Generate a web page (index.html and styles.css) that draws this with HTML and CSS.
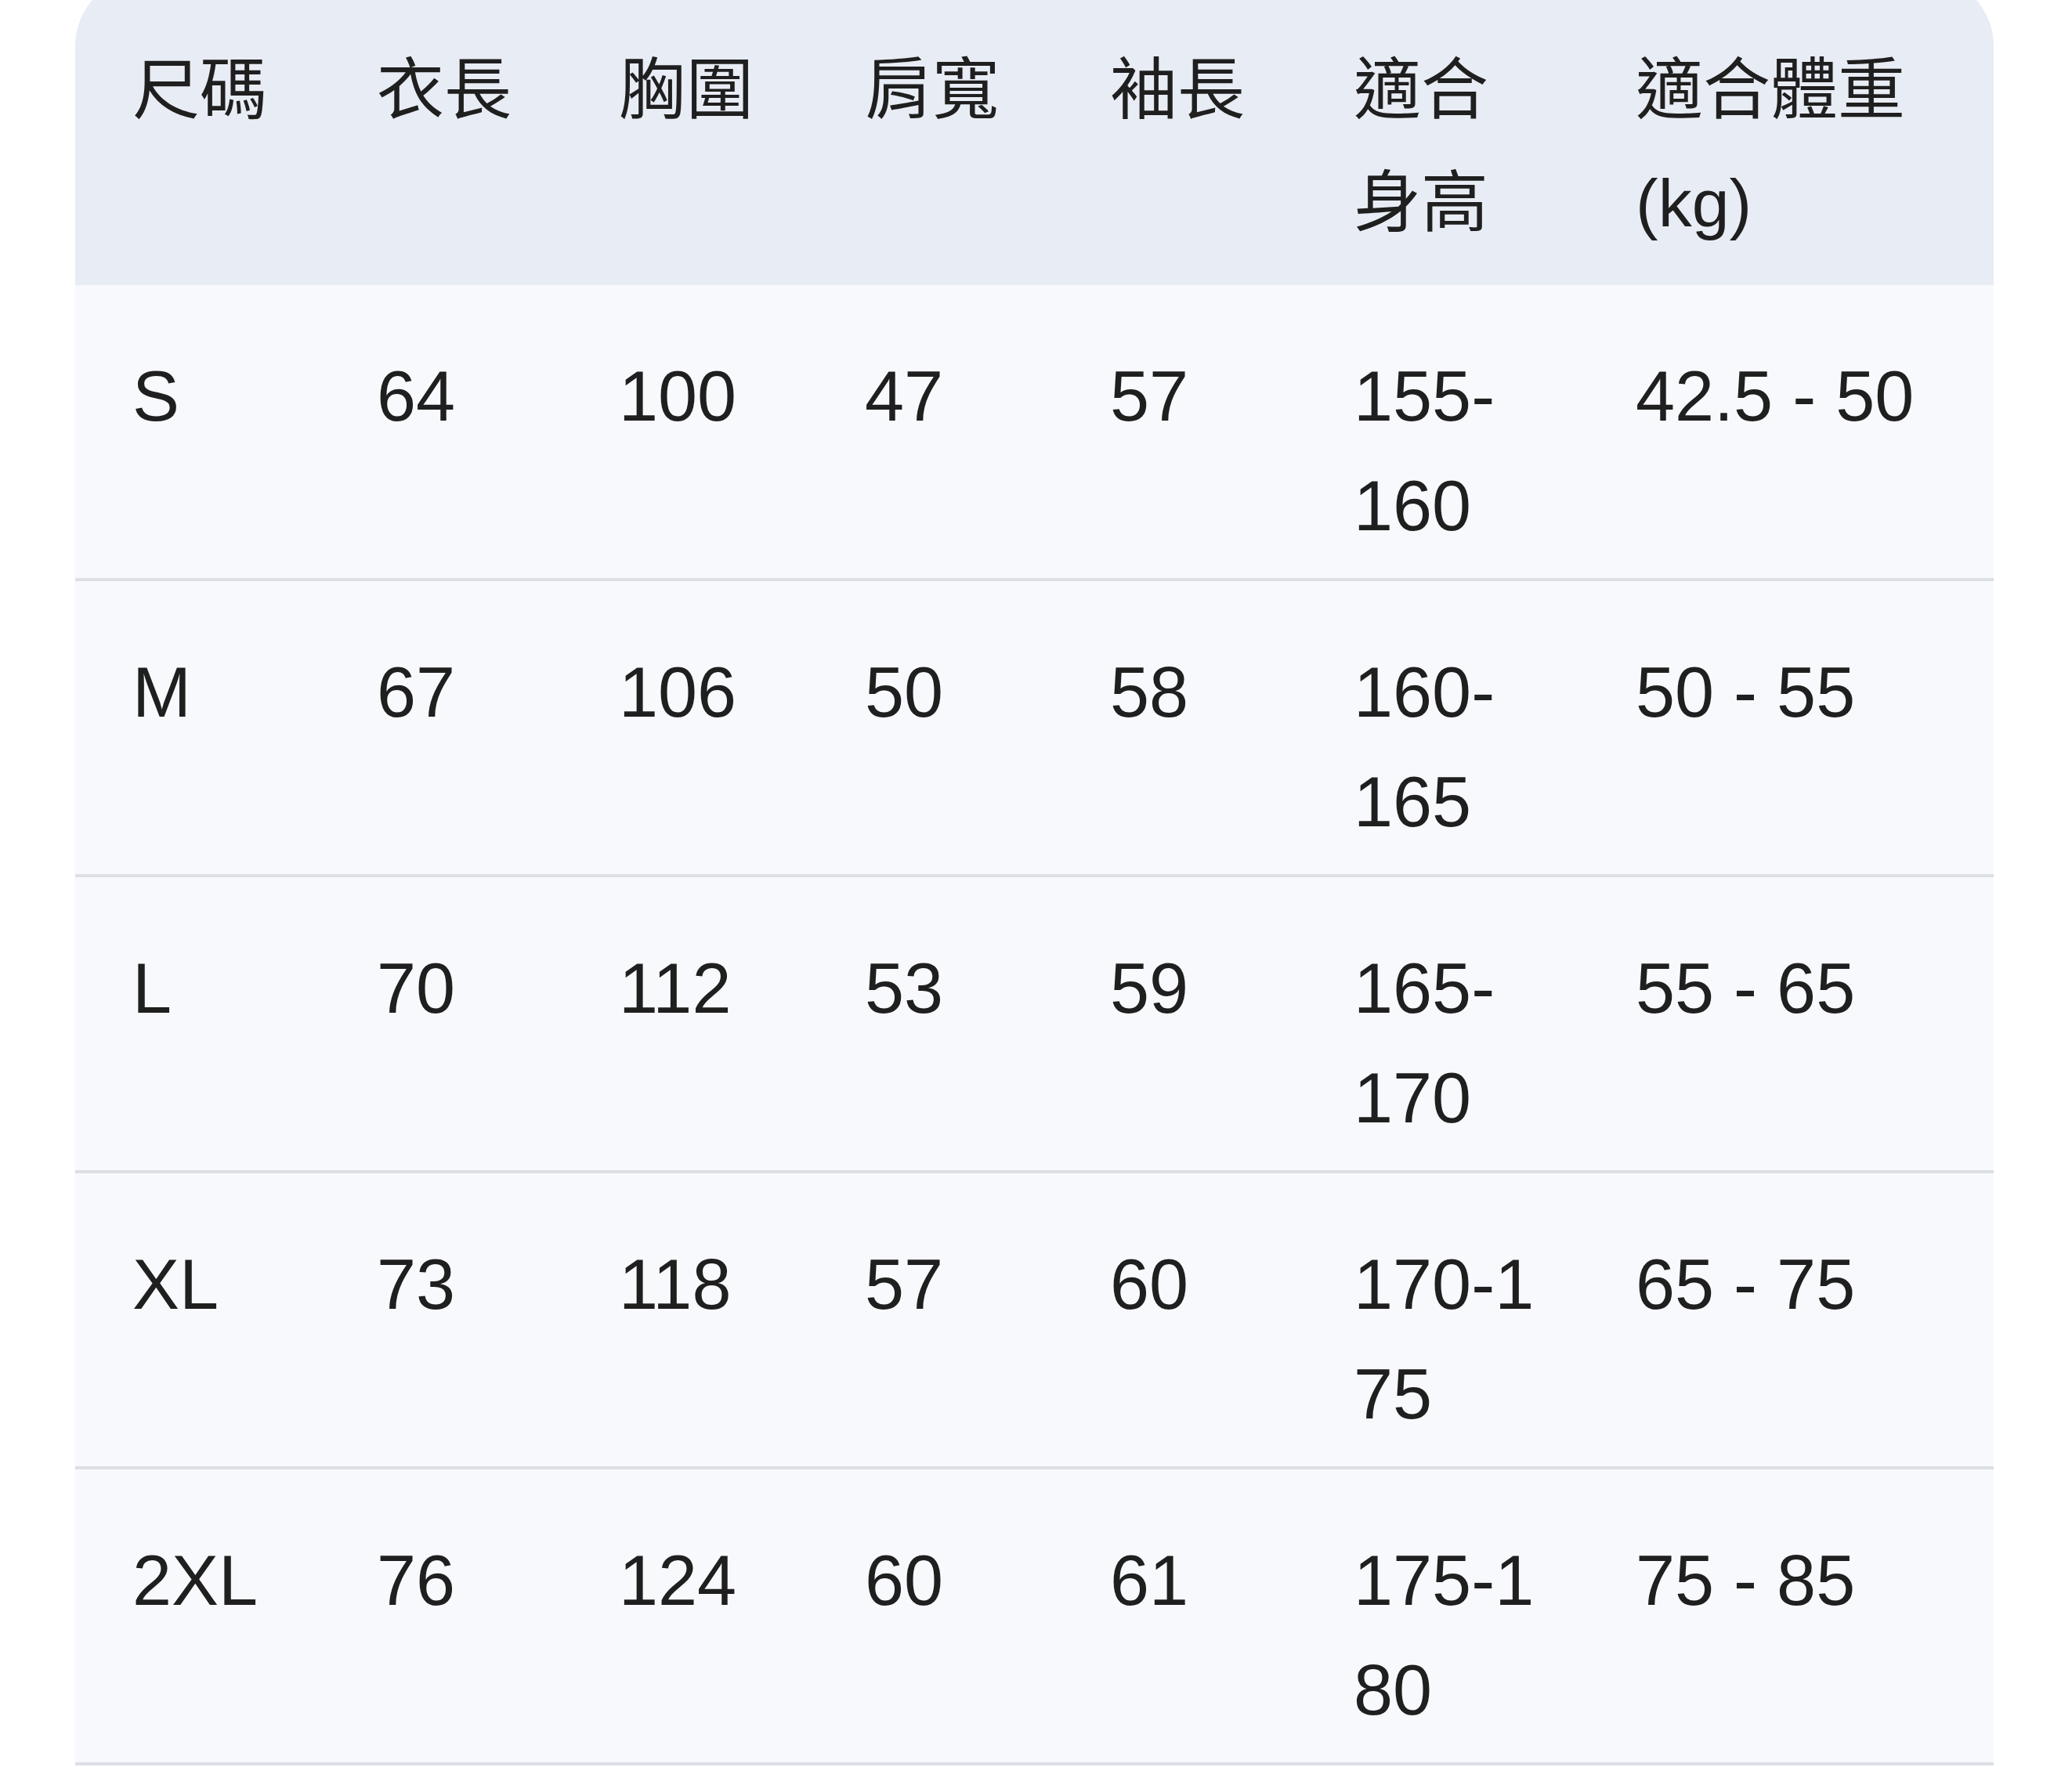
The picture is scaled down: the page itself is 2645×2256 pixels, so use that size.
FILE: index.html
```html
<!DOCTYPE html>
<html lang="zh-Hant">
<head>
<meta charset="utf-8">
<title>尺碼表</title>
<link rel="stylesheet" href="styles.css">
</head>
<body>
<div class="card">
  <table class="size-table">
    <colgroup>
      <col class="c1"><col class="c2"><col class="c3"><col class="c4"><col class="c5"><col class="c6"><col class="c7">
    </colgroup>
    <thead>
      <tr>
        <th>尺碼</th><th>衣長</th><th>胸圍</th><th>肩寬</th><th>袖長</th><th>適合身高</th><th>適合體重(kg)</th>
      </tr>
    </thead>
    <tbody>
      <tr><td>S</td><td>64</td><td>100</td><td>47</td><td>57</td><td>155-160</td><td>42.5 - 50</td></tr>
      <tr><td>M</td><td>67</td><td>106</td><td>50</td><td>58</td><td>160-165</td><td>50 - 55</td></tr>
      <tr><td>L</td><td>70</td><td>112</td><td>53</td><td>59</td><td>165-170</td><td>55 - 65</td></tr>
      <tr><td>XL</td><td>73</td><td>118</td><td>57</td><td>60</td><td>170-&#8288;175</td><td>65 - 75</td></tr>
      <tr><td>2XL</td><td>76</td><td>124</td><td>60</td><td>61</td><td>175-&#8288;180</td><td>75 - 85</td></tr>
    </tbody>
  </table>
</div>
</body>
</html>
```

FILE: styles.css
```css
html, body {
  margin: 0;
  padding: 0;
  background: #ffffff;
}

body {
  font-family: "Liberation Sans", "Noto Sans CJK TC", sans-serif;
  color: #1f1f1f;
  overflow: hidden;
}

.card {
  width: 2449px;
  margin: -31px 0 0 96px;
  border-radius: 90px 90px 0 0;
  overflow: hidden;
  background: #f7f9fc;
}

.size-table {
  width: 2449px;
  table-layout: fixed;
  border-collapse: separate;
  border-spacing: 0;
  font-size: 90px;
  line-height: 140px;
}

.c1 { width: 312px; }
.c2 { width: 309px; }
.c3 { width: 314px; }
.c4 { width: 313px; }
.c5 { width: 311px; }
.c6 { width: 360px; }
.c7 { width: 530px; }

.size-table th,
.size-table td {
  text-align: left;
  vertical-align: top;
  padding: 72px 40px 22px 73px;
  overflow-wrap: anywhere;
}

.size-table th {
  background: #e8ecf4;
  font-weight: 400;
  font-size: 86px;
  line-height: 144px;
  padding-top: 74px;
  padding-bottom: 33px;
}

.size-table td {
  font-weight: 400;
  border-bottom: 4px solid #dcdfe4;
}
```
